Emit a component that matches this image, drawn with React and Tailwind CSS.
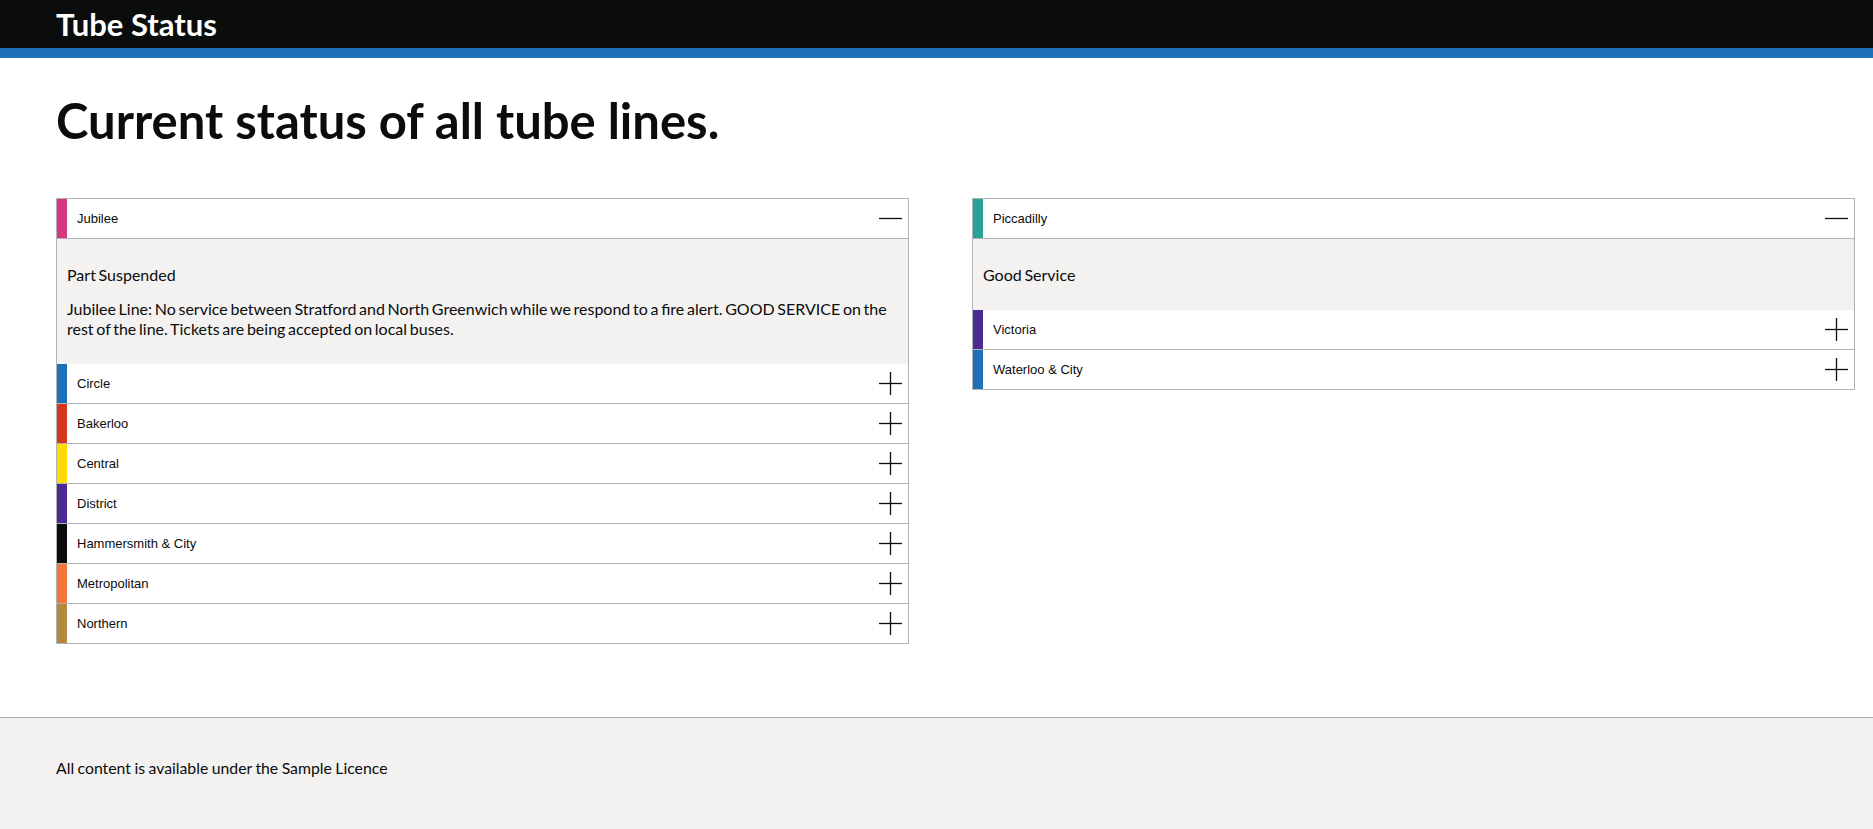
import React from "react";

const GDS = { fontFamily: 'Lato, "Liberation Sans", Arial, sans-serif' };
const ROW = { fontFamily: '"Liberation Sans", Arial, sans-serif' };

function Plus() {
  return (
    <svg width="23" height="23" viewBox="0 0 23 23" className="block">
      <line x1="0" y1="11.5" x2="23" y2="11.5" stroke="#0b0c0c" strokeWidth="1.3" />
      <line x1="11.5" y1="0" x2="11.5" y2="23" stroke="#0b0c0c" strokeWidth="1.3" />
    </svg>
  );
}

function Minus() {
  return (
    <svg width="23" height="23" viewBox="0 0 23 23" className="block">
      <line x1="0" y1="11.5" x2="23" y2="11.5" stroke="#0b0c0c" strokeWidth="1.3" />
    </svg>
  );
}

function Accordion({ items }) {
  return (
    <div className="border-t border-l border-r border-[#b1b4b6]">
      {items.map((it) => (
        <div key={it.name}>
          <div className="flex h-[40px] items-stretch border-b border-[#b1b4b6] bg-white">
            <div className={"w-[10px] shrink-0 " + it.bar} />
            <div className="flex flex-1 items-center pl-[10px] text-[13px] text-[#0b0c0c]" style={ROW}>
              {it.name}
            </div>
            <div className="flex items-center pr-[6px]">{it.open ? <Minus /> : <Plus />}</div>
          </div>
          {it.open && (
            <div className="flex flex-col gap-[14px] bg-[#f3f2f1] px-[10px] pt-[26px] pb-[25px] text-[16px] leading-[20px] text-[#0b0c0c]" style={GDS}>
              {it.body.map((p, i) => (
                <p key={i} className="[word-spacing:-1.4px]">{p}</p>
              ))}
            </div>
          )}
        </div>
      ))}
    </div>
  );
}

const left = [
  {
    name: "Jubilee",
    bar: "bg-[#d53880]",
    open: true,
    body: [
      "Part Suspended",
      "Jubilee Line: No service between Stratford and North Greenwich while we respond to a fire alert. GOOD SERVICE on the rest of the line. Tickets are being accepted on local buses.",
    ],
  },
  { name: "Circle", bar: "bg-[#1d70b8]" },
  { name: "Bakerloo", bar: "bg-[#d4351c]" },
  { name: "Central", bar: "bg-[#ffdd00]" },
  { name: "District", bar: "bg-[#4c2c92]" },
  { name: "Hammersmith & City", bar: "bg-[#0b0c0c]" },
  { name: "Metropolitan", bar: "bg-[#f47738]" },
  { name: "Northern", bar: "bg-[#b58840]" },
];

const right = [
  { name: "Piccadilly", bar: "bg-[#28a197]", open: true, body: ["Good Service"] },
  { name: "Victoria", bar: "bg-[#4c2c92]" },
  { name: "Waterloo & City", bar: "bg-[#1d70b8]" },
];

export default function App() {
  return (
    <div className="flex min-h-screen flex-col bg-white text-[#0b0c0c]">
      <header>
        <div className="flex h-[48px] items-center bg-[#0b0c0c] pl-[56px]">
          <span className="text-[31px] font-bold leading-none text-white" style={GDS}>
            Tube Status
          </span>
        </div>
        <div className="h-[10px] bg-[#1d70b8]" />
      </header>
      <main className="flex-1 pl-[56px] pr-[18px]">
        <h1 className="mt-[38px] mb-[54px] text-[49px] font-bold leading-[48px]" style={GDS}>
          Current status of all tube lines.
        </h1>
        <div className="flex items-start gap-[63px]">
          <div className="w-[853px] shrink-0">
            <Accordion items={left} />
          </div>
          <div className="flex-1">
            <Accordion items={right} />
          </div>
        </div>
      </main>
      <footer className="border-t border-[#b1b4b6] bg-[#f3f2f1] pl-[56px] pt-[40px] pb-[51px]">
        <p className="text-[15.8px] leading-[20px] [word-spacing:-0.6px]" style={GDS}>
          All content is available under the Sample Licence
        </p>
      </footer>
    </div>
  );
}
